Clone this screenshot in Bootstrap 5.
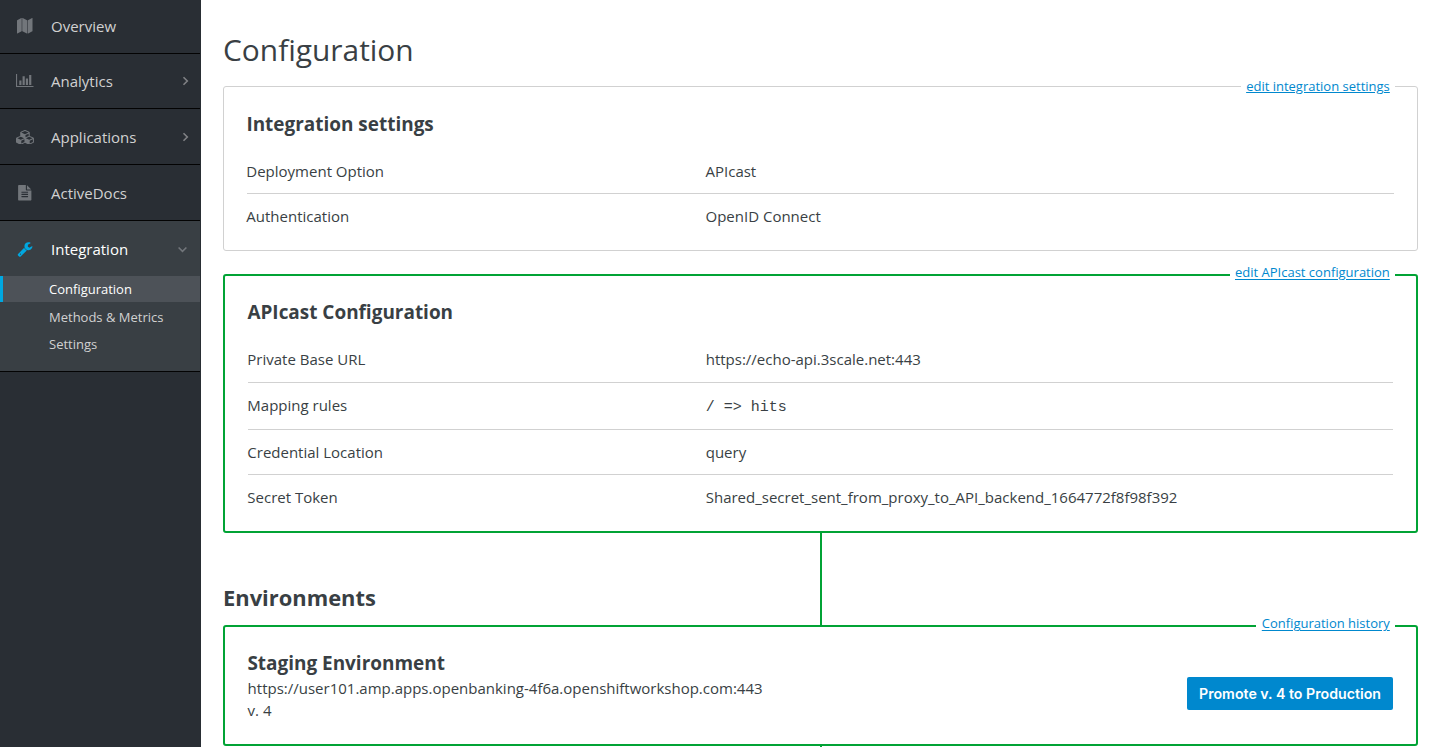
<!DOCTYPE html>
<html lang="en">
<head>
<meta charset="utf-8">
<meta name="viewport" content="width=device-width, initial-scale=1">
<title>Configuration</title>
<link href="https://cdn.jsdelivr.net/npm/bootstrap@5.3.0/dist/css/bootstrap.min.css" rel="stylesheet">
<script src="https://cdn.jsdelivr.net/npm/bootstrap@5.3.0/dist/js/bootstrap.bundle.min.js" defer></script>
<style>
body{font-family:"Open Sans",sans-serif;font-size:15px;line-height:22px;color:#393f44;height:747px;overflow:hidden}
.side{width:201px;height:747px;background:#292e34}
.side-item{width:200px;border-bottom:1px solid #030303;color:#d1d1d1}
.side-link{height:55px;padding:1px 11px 0 15px;color:inherit;text-decoration:none}
.side-item:first-child .side-link{height:53px;padding:0 11px 1px 15px}
.side-item:nth-child(2) .side-link{height:54px;padding:0 11px 1px 15px}
.glyph{width:20px;height:20px;margin-right:16px;fill:#72767b}
.chev{width:7px;height:10px;fill:none;stroke:#808285;stroke-width:1.6}
.chev-down{width:9px;height:7px;margin-right:2px;stroke:#72767b}
.side-item.open{background:#393f44;color:#fff;padding-bottom:14px}
.side-item.open .glyph{fill:#00a8e1}
.sub-link{height:27px;padding-left:49px;font-size:13px;color:#d1d1d1;text-decoration:none}
.sub-link.current{height:26px;background:#4d5258;color:#fff;border-left:3px solid #00a8e1;padding-left:46px;margin-bottom:1px}
main{padding:0 18px 0 22px;height:747px;overflow:hidden}
.title{font-size:29.900px;line-height:40px;font-weight:400;margin:30px 0 16px}
.box{border:1px solid #d1d1d1;border-radius:3px;padding:24px 23px 12px}
.box.live{border:2px solid #01a335;padding-top:23px;margin-top:23px}
.box h3{font-size:18.950px;line-height:26px;font-weight:700;margin:0;text-indent:-.6px}
.corner{right:22px;top:-10px;background:#fff;padding:0 5.2px 0 5px;font-size:13px;line-height:18px}
.corner a{color:#0088ce;text-underline-offset:1px}
.live .corner{right:21px;top:-13px}
.live .corner a{text-underline-offset:2px}
.stage .corner{padding-left:5.600px}
.settings{margin:12px 0 0}
.line-row{border-bottom:1px solid #d1d1d1;padding-top:11px;height:45px}
.live .line-row:first-child{height:46px}
.live .line-row:nth-child(2){height:47px}
.settings .line-row:last-child{border-bottom:0;height:44px}
.line-row dt{width:40%;font-weight:400;margin:0;text-indent:-.7px}
.line-row dd{margin:0;text-indent:-.3px}
.line-row .mono{font-family:"Liberation Mono",monospace;font-size:15px;padding-top:3px}
.btn-promote{background:#0088ce;color:#fff;border:0;border-radius:2px;font:600 14.2px/33px Inter,sans-serif;width:206px;height:33px;margin-top:27px}
.envs{font-size:21.900px;line-height:30px;font-weight:700;margin:0}
.pipe-area{height:92px;padding-top:50px}
.pipe{width:2px;height:92px;background:#01a335;left:597px;top:0}
.pipe-next{height:1px}
.box.stage{padding-bottom:23px;margin-top:0}
.stage-text{text-indent:-.4px}
.stage-url{margin-top:1px}
</style>
</head>
<body>
<div class="d-flex">
<nav class="side flex-shrink-0">
  <div class="side-item"><a class="side-link d-flex align-items-center" href="#">
    <span class="glyph d-flex align-items-center justify-content-center"><svg width="15.500" height="15.500" viewBox="0 0 1792 1792"><path d="M512 0q13 0 22.500 9.500t9.500 22.500v1472q0 20-17 28l-480 256q-7 4-15 4-13 0-22.500-9.500t-9.500-22.500v-1472q0-20 17-28l480-256q7-4 15-4zm1248 0q13 0 22.500 9.500t9.500 22.500v1472q0 20-17 28l-480 256q-7 4-15 4-13 0-22.500-9.500t-9.500-22.500v-1472q0-20 17-28l480-256q7-4 15-4zm-1120 0q8 0 14 3l512 256q18 10 18 29v1472q0 13-9.500 22.500t-22.500 9.500q-8 0-14-3l-512-256q-18-10-18-29v-1472q0-13 9.500-22.500t22.500-9.500z"/></svg></span>Overview</a></div>
  <div class="side-item"><a class="side-link d-flex align-items-center" href="#">
    <span class="glyph d-flex align-items-center justify-content-center"><svg width="17.500" height="13.125" viewBox="0 128 2048 1536"><path d="M640 896v512h-256v-512h256zm384-512v1024h-256v-1024h256zm1024 1152v128h-2048v-1536h128v1408h1920zm-640-896v768h-256v-768h256zm384-384v1152h-256v-1152h256z"/></svg></span>Analytics
    <svg class="chev ms-auto" viewBox="0 0 7 10"><path d="M1.500 1.200 5.300 5 1.500 8.800"/></svg></a></div>
  <div class="side-item"><a class="side-link d-flex align-items-center" href="#">
    <span class="glyph d-flex align-items-center justify-content-center"><svg width="19" height="14.800" viewBox="0 0 2304 1792"><path d="M640 1632l384-192v-314l-384 164v342zm-64-454l404-173-404-173-404 173zm1088 454l384-192v-314l-384 164v342zm-64-454l404-173-404-173-404 173zm-448-293l384-165v-266l-384 164v267zm-64-379l441-189-441-189-441 189zm1088 518v416q0 36-19 67t-52 47l-448 224q-25 14-57 14t-57-14l-448-224q-4-2-7-4-2 2-7 4l-448 224q-25 14-57 14t-57-14l-448-224q-33-16-52-47t-19-67v-416q0-38 21.500-70t56.500-48l434-186v-400q0-38 21.500-70t56.500-48l448-192q23-10 50-10t50 10l448 192q35 16 56.500 48t21.500 70v400l434 186q36 16 57 48t21 70z"/></svg></span>Applications
    <svg class="chev ms-auto" viewBox="0 0 7 10"><path d="M1.500 1.200 5.300 5 1.500 8.800"/></svg></a></div>
  <div class="side-item"><a class="side-link d-flex align-items-center" href="#">
    <span class="glyph d-flex align-items-center justify-content-center"><svg width="15.500" height="15.500" viewBox="0 0 1792 1792"><path d="M1596 476q14 14 28 36h-472v-472q22 14 36 28zm-476 164h544v1056q0 40-28 68t-68 28h-1344q-40 0-68-28t-28-68v-1600q0-40 28-68t68-28h800v544q0 40 28 68t68 28zm160 736v-64q0-14-9-23t-23-9h-704q-14 0-23 9t-9 23v64q0 14 9 23t23 9h704q14 0 23-9t9-23zm0-256v-64q0-14-9-23t-23-9h-704q-14 0-23 9t-9 23v64q0 14 9 23t23 9h704q14 0 23-9t9-23zm0-256v-64q0-14-9-23t-23-9h-704q-14 0-23 9t-9 23v64q0 14 9 23t23 9h704q14 0 23-9t9-23z"/></svg></span>ActiveDocs</a></div>
  <div class="side-item open"><a class="side-link d-flex align-items-center" href="#">
    <span class="glyph d-flex align-items-center justify-content-center"><svg width="16" height="16" viewBox="0 0 1792 1792"><path d="M448 1472q0-26-19-45t-45-19-45 19-19 45 19 45 45 19 45-19 19-45zm644-420l-682 682q-37 37-90 37-52 0-91-37l-106-108q-38-36-38-90 0-53 38-91l681-681q39 98 114.500 173.500t173.500 114.500zm634-435q0 39-23 106-47 134-164.500 217.500t-258.500 83.500q-185 0-316.500-131.500t-131.500-316.500 131.500-316.500 316.500-131.500q58 0 121.500 16.500t107.500 46.500q16 11 16 28t-16 28l-293 169v224l193 107q5-3 79-48.500t135.500-81 70.500-35.500q15 0 23.500 10t8.500 25z"/></svg></span>Integration
    <svg class="chev chev-down ms-auto" viewBox="0 0 9 7"><path d="M.6 1.500 4.500 5.300 8.400 1.500"/></svg></a>
    <a class="sub-link current d-flex align-items-center" href="#">Configuration</a>
    <a class="sub-link d-flex align-items-center" href="#">Methods &amp; Metrics</a>
    <a class="sub-link d-flex align-items-center" href="#">Settings</a>
  </div>
</nav>
<main class="flex-grow-1">
  <h1 class="title">Configuration</h1>
  <section class="box position-relative">
    <div class="corner position-absolute"><a href="#">edit integration settings</a></div>
    <h3>Integration settings</h3>
    <dl class="settings">
      <div class="line-row d-flex align-items-start"><dt>Deployment Option</dt><dd>APIcast</dd></div>
      <div class="line-row d-flex align-items-start"><dt>Authentication</dt><dd>OpenID Connect</dd></div>
    </dl>
  </section>
  <section class="box live position-relative">
    <div class="corner position-absolute"><a href="#">edit APIcast configuration</a></div>
    <h3>APIcast Configuration</h3>
    <dl class="settings">
      <div class="line-row d-flex align-items-start"><dt>Private Base URL</dt><dd>https://echo-api.3scale.net:443</dd></div>
      <div class="line-row d-flex align-items-start"><dt>Mapping rules</dt><dd class="mono">/ =&gt; hits</dd></div>
      <div class="line-row d-flex align-items-start"><dt>Credential Location</dt><dd>query</dd></div>
      <div class="line-row d-flex align-items-start"><dt>Secret Token</dt><dd>Shared_secret_sent_from_proxy_to_API_backend_1664772f8f98f392</dd></div>
    </dl>
  </section>
  <div class="pipe-area position-relative"><div class="pipe position-absolute"></div><h2 class="envs">Environments</h2></div>
  <section class="box live stage position-relative d-flex justify-content-between align-items-start">
    <div class="corner position-absolute"><a href="#">Configuration history</a></div>
    <div class="stage-text"><h3>Staging Environment</h3><div class="stage-url">https://user101.amp.apps.openbanking-4f6a.openshiftworkshop.com:443</div><div>v. 4</div></div>
    <button class="btn btn-promote p-0">Promote v. 4 to Production</button>
  </section>
  <div class="position-relative"><div class="pipe pipe-next position-absolute"></div></div>
</main>
</div>
</body>
</html>
